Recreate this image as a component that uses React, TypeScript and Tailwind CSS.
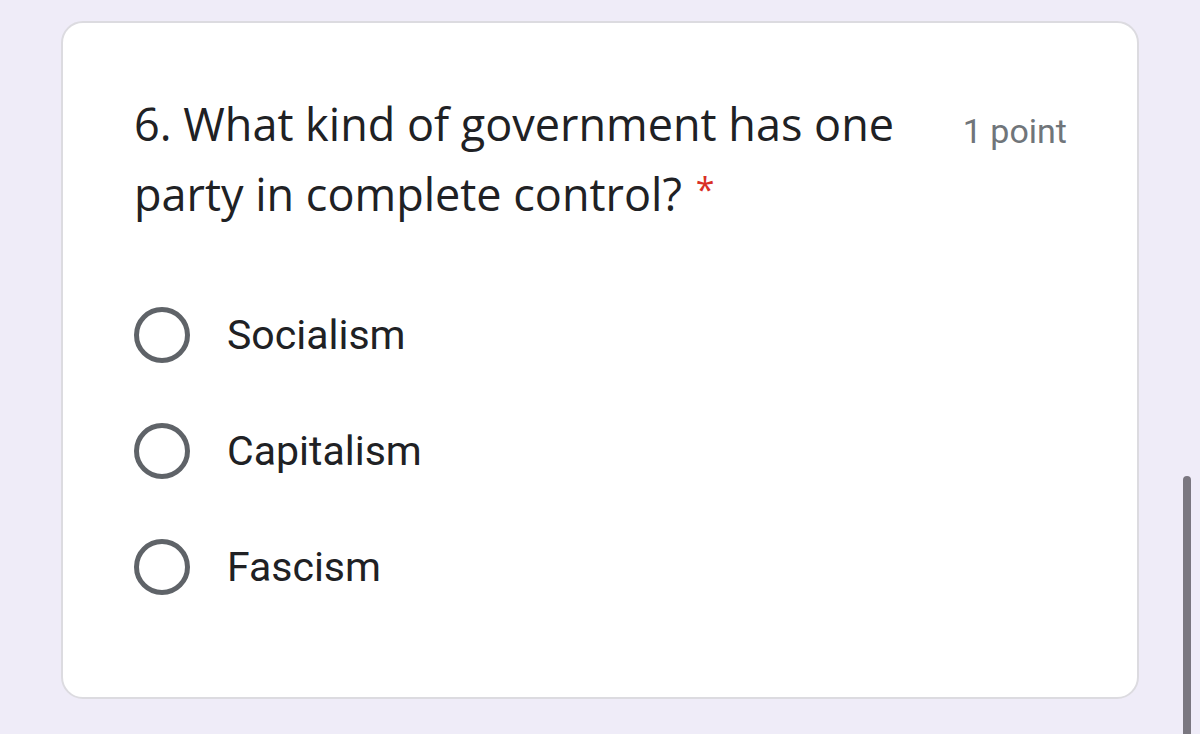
const options = ["Socialism", "Capitalism", "Fascism"];

export default function App() {
  return (
    <div className="relative h-[734px] w-[1200px] overflow-hidden bg-[#efecf8]">
      <div className="pl-[61px] pt-[21px]">
        <div className="h-[678px] w-[1078px] rounded-[22px] border-2 border-[#dcdbe0] bg-white pl-[71px] pr-[70px] pt-[88px]">
          <div className="flex items-start justify-between">
            <h2 className="w-[780px] font-['Open_Sans',sans-serif] text-[45px] leading-[70px] text-[#202124] -mt-[22px]">
              6. What kind of government has one party in complete control?
              <span className="ml-[14px] align-top text-[34px] leading-[60px] text-[#d93025]">*</span>
            </h2>
            <span className="font-['Roboto',sans-serif] text-[34px] leading-[40px] text-[#70757a]">
              1 point
            </span>
          </div>
          <div className="mt-[78px] flex flex-col gap-[60px]">
            {options.map((opt) => (
              <label key={opt} className="flex h-[56px] items-center gap-[37px]">
                <span className="h-[56px] w-[56px] rounded-full border-[5px] border-[#5f6368]" />
                <span className="font-['Roboto',sans-serif] text-[41px] leading-[48px] text-[#202124]">
                  {opt}
                </span>
              </label>
            ))}
          </div>
        </div>
      </div>
      <div className="absolute left-[1183px] top-[476px] h-[270px] w-[8px] rounded-full bg-[#7a7780]" />
    </div>
  );
}
